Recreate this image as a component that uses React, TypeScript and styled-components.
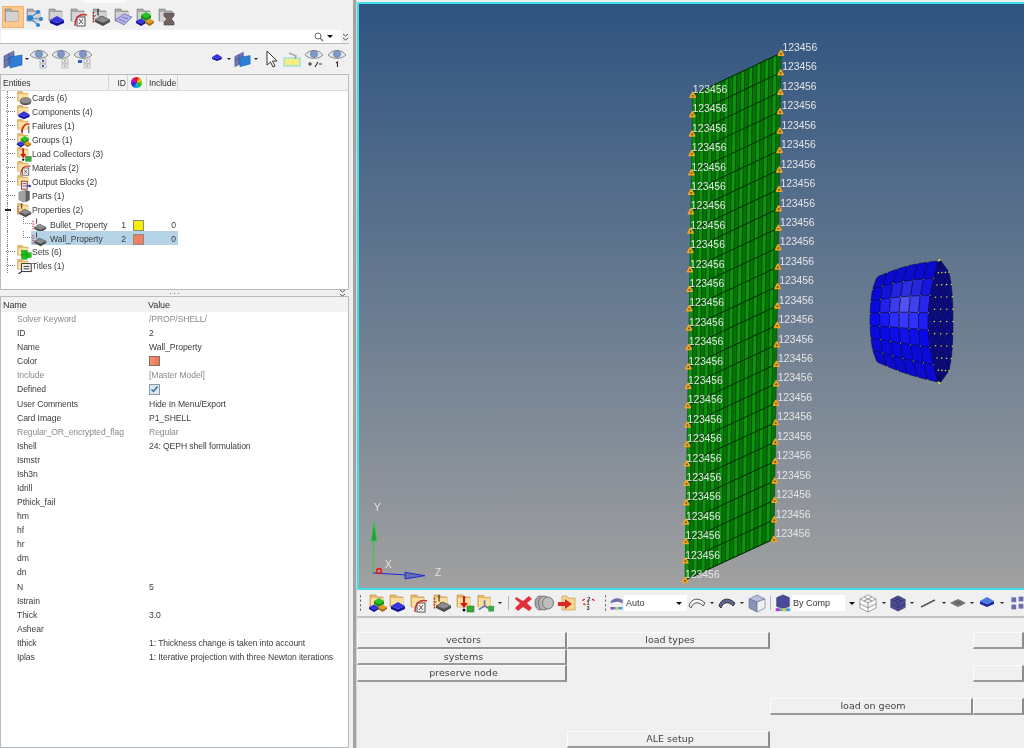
import type { ReactNode } from "react";
import styled, { createGlobalStyle } from "styled-components";

const GlobalStyle = createGlobalStyle`
  html, body { margin: 0; padding: 0; background: #f0f0f0; }
  #root { width: 1024px; height: 748px; overflow: hidden; }
`;

const Page = styled.div`
  width: 1024px;
  height: 748px;
  display: grid;
  grid-template-columns: 349px 8px 1fr;
  background: #f0f0f0;
  font-family: "Liberation Sans", Arial, sans-serif;
  color: #333;
  overflow: hidden;
  filter: blur(0.3px);
`;

const LeftPanel = styled.div`
  display: flex;
  flex-direction: column;
  height: 748px;
  min-width: 0;
`;

const Splitter = styled.div`
  box-sizing: border-box;
  margin-left: 4px;
  border-left: 3px solid #a3a3a3;
  border-right: 1px solid #d4d4d4;
  background: #f0f0f0;
`;

const RightPanel = styled.div`
  display: flex;
  flex-direction: column;
  height: 748px;
  min-width: 0;
`;

const Viewport = styled.div`
  height: 588px;
  flex: none;
  box-sizing: border-box;
  margin-top: 2px;
  border-top: 2px solid #40dfe6;
  border-left: 2px solid #40dfe6;
  border-bottom: 2px solid #40dfe6;
  background: linear-gradient(180deg, #2f5480 0%, #a0a0a0 100%);
  svg { display: block; }
`;

const TopTabs = styled.div`
  height: 3px;
  display: flex;
  padding-left: 84px;
  &::before {
    content: "";
    width: 41px;
    background: #fafafa;
  }
`;

const IconBar = styled.div`
  height: 27px;
  display: flex;
  align-items: center;
  padding-left: 2px;
`;

const ToolSlot = styled.div<{ $w?: number; $active?: boolean }>`
  width: ${(p) => p.$w ?? 22}px;
  height: 22px;
  flex: none;
  display: flex;
  align-items: center;
  justify-content: center;
  background: ${(p) => (p.$active ? "#fdc98c" : "transparent")};
  border: ${(p) => (p.$active ? "1px solid #f2b26b" : "none")};
  box-sizing: border-box;
`;

const SearchRow = styled.div`
  height: 13px;
  display: flex;
  align-items: center;
  border-bottom: 1px solid #b9b9b9;
`;

const SearchBox = styled.div`
  width: 340px;
  height: 13px;
  margin-left: 1px;
  background: #fff;
  display: flex;
  align-items: center;
  justify-content: flex-end;
  gap: 3px;
  padding-right: 8px;
  box-sizing: border-box;
`;

const ViewBar = styled.div`
  height: 30px;
  display: flex;
  align-items: center;
  padding-left: 3px;
`;

const Spacer = styled.div`
  flex: 1;
`;

const TreeBox = styled.div`
  height: 216px;
  box-sizing: border-box;
  border: 1px solid #b4bcc4;
  background: #fff;
  font-size: 8.6px;
  letter-spacing: -0.08px;
`;

const HeaderRow = styled.div`
  height: 15px;
  display: grid;
  grid-template-columns: 108px 19px 19px 31px;
  background: #f2f2f2;
  border-bottom: 1px solid #d8dde2;
`;

const HeaderCell = styled.div<{ $right?: boolean }>`
  display: flex;
  align-items: center;
  justify-content: ${(p) => (p.$right ? "flex-end" : "flex-start")};
  padding: 0 1px 0 2px;
  border-right: 1px solid #cfd5da;
  color: #333;
  line-height: 14px;
`;

const ColorWheel = styled.span`
  width: 11px;
  height: 11px;
  border-radius: 50%;
  margin-left: 1px;
  background: conic-gradient(#e01010, #e0d010, #10c020, #10b0e0, #2020e0, #d010c0, #e01010);
`;

const TreeList = styled.div`
  padding-top: 0;
`;

const TreeRow = styled.div`
  height: 14px;
  display: flex;
  align-items: center;
  position: relative;
  white-space: nowrap;
`;

const Branch = styled.span<{ $open?: boolean }>`
  width: 15px;
  height: 14px;
  flex: none;
  position: relative;
  &::before {
    content: "";
    position: absolute;
    left: 6px;
    top: 0;
    bottom: 0;
    border-left: 1px dotted #888;
  }
  &::after {
    content: "";
    position: absolute;
    left: ${(p) => (p.$open ? 4 : 5)}px;
    width: ${(p) => (p.$open ? 6 : 9)}px;
    top: 6px;
    border-top: ${(p) => (p.$open ? "2px solid #222" : "1px dotted #777")};
  }
`;

const ChildBranch = styled.span`
  width: 30px;
  height: 14px;
  flex: none;
  position: relative;
  &::before {
    content: "";
    position: absolute;
    left: 6px;
    top: 0;
    bottom: 0;
    border-left: 1px dotted #888;
  }
  &::after {
    content: "";
    position: absolute;
    left: 22px;
    top: 0;
    height: 6px;
    width: 8px;
    border-left: 1px dotted #888;
    border-bottom: 1px dotted #888;
  }
`;

const TreeLabel = styled.span`
  color: #3c3c3c;
`;

const ChildCells = styled.div<{ $selected?: boolean }>`
  width: 147px;
  height: 14px;
  display: grid;
  grid-template-columns: 19px 59px 19px 20px 30px;
  align-items: center;
  background: ${(p) => (p.$selected ? "#b5d3e7" : "transparent")};
`;

const ChildName = styled.span`
  color: #3c3c3c;
`;

const NumCell = styled.span`
  text-align: right;
  padding-right: 2px;
  color: #3c3c3c;
`;

const Swatch = styled.span<{ $color: string }>`
  display: block;
  width: 11px;
  height: 11px;
  box-sizing: border-box;
  border: 1px solid #8a8a8a;
  background: ${(p) => p.$color};
  margin-left: 5px;
`;

const SashRow = styled.div`
  height: 6px;
  position: relative;
  display: flex;
  justify-content: center;
  align-items: center;
  gap: 3px;
`;

const SashDot = styled.span`
  width: 1px;
  height: 1px;
  background: #777;
`;

const SashArrow = styled.span`
  position: absolute;
  right: 3px;
  top: -1px;
  line-height: 0;
`;

const PropBox = styled.div`
  flex: 1;
  box-sizing: border-box;
  border: 1px solid #b4bcc4;
  background: #fff;
  font-size: 8.6px;
  letter-spacing: -0.08px;
`;

const PropHeader = styled.div`
  height: 15px;
  display: grid;
  grid-template-columns: 145px 1fr;
  align-items: center;
  background: #f2f2f2;
  padding-left: 2px;
  color: #333;
  font-size: 9px;
`;

const PropRow = styled.div`
  height: 14.08px;
  display: grid;
  grid-template-columns: 132px 1fr;
  align-items: center;
  padding-left: 16px;
  white-space: nowrap;
`;

const PropText = styled.span<{ $muted?: boolean }>`
  color: ${(p) => (p.$muted ? "#8a8a8a" : "#3c3c3c")};
`;

const ColorChip = styled.span`
  display: block;
  width: 11px;
  height: 10px;
  box-sizing: border-box;
  border: 1px solid #8c6a5c;
  background: linear-gradient(90deg, #f4926e, #ec7654);
`;

const CheckChip = styled.span`
  display: flex;
  width: 11px;
  height: 11px;
  box-sizing: border-box;
  border: 1px solid #8a9aa6;
  background: #dfe6ea;
  align-items: center;
  justify-content: center;
`;

const BottomBar = styled.div`
  height: 28px;
  flex: none;
  display: flex;
  align-items: center;
  border-bottom: 2px solid #c2c2c2;
  box-sizing: border-box;
  overflow: hidden;
`;

const Handle = styled.span`
  width: 8px;
  flex: none;
  height: 18px;
  margin-left: 2px;
  background-image: radial-gradient(circle, #444 0.8px, transparent 1px);
  background-size: 3px 4.5px;
  background-repeat: repeat-y;
`;

const MiddleHandle = styled(Handle)`
  width: 6px;
  margin-left: 8px;
`;

const Separator = styled.span`
  width: 1px;
  height: 14px;
  flex: none;
  background: #b5b5b5;
  margin: 0 3px;
`;

const ArrowDown = styled.span`
  width: 0;
  height: 0;
  flex: none;
  border-left: 2px solid transparent;
  border-right: 2px solid transparent;
  border-top: 2px solid #222;
  margin: 0 3px;
`;

const TightArrow = styled(ArrowDown)`
  margin: 0 -1px 0 2px;
`;

const Combo = styled.div<{ $w: number; $pad: number }>`
  width: ${(p) => p.$w}px;
  height: 16px;
  flex: none;
  background: #fff;
  display: flex;
  align-items: center;
  justify-content: space-between;
  padding: 0 5px 0 ${(p) => p.$pad}px;
  box-sizing: border-box;
  font-size: 9px;
  color: #333;
`;

const ComboArrow = styled.span`
  width: 0;
  height: 0;
  border-left: 3px solid transparent;
  border-right: 3px solid transparent;
  border-top: 3px solid #111;
`;

const OuterComboArrow = styled(ComboArrow)`
  flex: none;
  margin: 0 2px 0 4px;
`;

const PanelGrid = styled.div`
  flex: 1;
  display: grid;
  grid-template-columns: 210px 203px 203px 1fr;
  grid-template-rows: repeat(7, 16.5px);
  padding-top: 14px;
  border-bottom: 1px solid #c8c8c8;
  font-family: "DejaVu Sans", sans-serif;
  font-size: 9.5px;
  color: #444;
`;

const PanelButton = styled.div<{ $col: number; $row: number }>`
  grid-column: ${(p) => p.$col};
  grid-row: ${(p) => p.$row};
  display: flex;
  align-items: center;
  justify-content: center;
  box-sizing: border-box;
  padding-left: 4px;
  background: #f0f0f0;
  border-top: 1px solid #fbfbfb;
  border-left: 1px solid #fbfbfb;
  border-right: 2px solid #8c8c8c;
  border-bottom: 2px solid #999;
`;

const TONES = {
  gray: { back: "#a9a9a9", front: "#d2d2d2", edge: "#7e7e7e" },
  yellow: { back: "#e8b868", front: "#fbdf9f", edge: "#c08e3e" },
};

function Glyph({ size = 20, children }: { size?: number; children: ReactNode }) {
  return (
    <svg width={size} height={size} viewBox="0 0 20 20">
      {children}
    </svg>
  );
}

function Folder({ tone }: { tone: "gray" | "yellow" }) {
  const t = TONES[tone];
  return (
    <>
      <path d="M2 2h6l1 2h6v10H2z" fill={t.back} stroke={t.edge} strokeWidth="0.6" />
      <path d="M3 5h12v9H3z" fill={t.front} />
    </>
  );
}

const Slab = ({ fill = "#3535e0", side = "#12129a", y = 10 }: { fill?: string; side?: string; y?: number }) => (
  <>
    <path d={`M3 ${y + 3}l7 3 7-3v3l-7 3-7-3z`} fill={side} />
    <path d={`M3 ${y + 3}l7-4 7 4-7 3z`} fill={fill} />
  </>
);

const GrayDisc = () => (
  <>
    <ellipse cx="12" cy="15" rx="7" ry="4" fill="#555" />
    <ellipse cx="12" cy="13.2" rx="7" ry="3.8" fill="#8e8e8e" stroke="#444" strokeWidth="0.5" />
  </>
);

const Failure = () => (
  <>
    <path d="M8 19V12M16 19v-9" stroke="#333" strokeWidth="1.1" />
    <path d="M7 18C8 9 13 6 17 8" fill="none" stroke="#d02020" strokeWidth="1.8" />
  </>
);

const Cubes = () => (
  <>
    <path d="M6 8l5-3 5 3-5 3z" fill="#22c422" />
    <path d="M6 8v3l5 3 5-3V8l-5 3z" fill="#129012" />
    <path d="M1 14l5-2.5 5 2.5-5 2.5z" fill="#3535e0" />
    <path d="M1 14v2l5 3 5-3v-2l-5 2.5z" fill="#12129a" />
    <path d="M10 14l4.500-2.500 4.500 2.500-4.500 2.500z" fill="#e09a20" />
    <path d="M10 14v2l4.500 3 4.500-3v-2l-4.500 2.500z" fill="#a86c10" />
  </>
);

const RedArrowBox = () => (
  <>
    <path d="M9 3v9" stroke="#d01818" strokeWidth="2.2" />
    <path d="M5 10h8L9 15z" fill="#d01818" />
    <circle cx="9" cy="17" r="1.5" fill="#111" />
    <rect x="12" y="13" width="7" height="6" fill="#3aa83a" stroke="#1b701b" strokeWidth="0.5" />
  </>
);

const MaterialMark = () => (
  <>
    <rect x="8" y="10" width="8" height="9" fill="#f4f4f4" stroke="#444" strokeWidth="0.9" />
    <path d="M6 19C6 10 11 6 18 8" fill="none" stroke="#c83030" strokeWidth="1.4" />
    <path d="M10 12l4 5M14 12l-4 5" stroke="#333" strokeWidth="0.8" />
  </>
);

const OutputMark = () => (
  <>
    <rect x="7" y="9" width="7" height="10" fill="#eee" stroke="#a02020" strokeWidth="1.1" />
    <path d="M8.500 12h4M8.500 15h4" stroke="#333" strokeWidth="0.9" />
    <path d="M13 15h5" stroke="#2020d0" strokeWidth="1.3" />
    <path d="M16 13l3.500 2-3.500 2z" fill="#2020d0" />
  </>
);

const PropMark = () => (
  <>
    <path d="M2.500 5v11" stroke="#d01818" strokeWidth="1.4" strokeDasharray="1.5 1.5" />
    <path d="M7 2v6" stroke="#222" strokeWidth="1.1" />
    <path d="M5 8l-2 2M7 8l2 2" stroke="#222" strokeWidth="0.5" />
    <path d="M4 13l7-4 8 4-7 3z" fill="#8d8d8d" stroke="#333" strokeWidth="0.6" />
    <path d="M4 13v2l8 4 7-4v-2l-7 3z" fill="#4c4c4c" />
  </>
);

const SetsMark = () => (
  <>
    <rect x="7" y="8" width="7" height="6" fill="#18c018" stroke="#0a7a0a" strokeWidth="0.5" />
    <rect x="12" y="11" width="7" height="6" fill="#18c018" stroke="#0a7a0a" strokeWidth="0.5" />
    <rect x="7" y="13" width="7" height="6" fill="#18c018" stroke="#0a7a0a" strokeWidth="0.5" />
  </>
);

const TitleMark = () => (
  <>
    <rect x="7" y="7" width="12" height="10" fill="#f4f4f4" stroke="#222" strokeWidth="1.1" />
    <path d="M9.500 10.500h7M9.500 13.500h7" stroke="#222" strokeWidth="1.1" />
    <path d="M7 17l-4 3" stroke="#222" strokeWidth="1.4" />
  </>
);

const Network = () => (
  <>
    <path d="M5 11l8-6M5 11l10 1M5 11l8 7" stroke="#4a90d0" strokeWidth="1.1" />
    <circle cx="5" cy="11" r="3" fill="#2d7fd0" />
    <circle cx="13" cy="5" r="2" fill="#2d7fd0" />
    <circle cx="16" cy="12" r="2" fill="#2d7fd0" />
    <circle cx="13" cy="18" r="2" fill="#2d7fd0" />
  </>
);

const Wavy = () => (
  <>
    <path d="M2 13l9-6 8 3-8 8z" fill="#b4b4e4" stroke="#6a6abc" strokeWidth="0.8" />
    <path d="M6 12l6 3M9 10l6 2" stroke="#6a6abc" strokeWidth="0.8" fill="none" />
  </>
);

const SpoolMark = () => (
  <path d="M7 6h10v3l-3 3 3 3v3H7v-3l3-3-3-3z" fill="#6e625e" stroke="#4a4240" strokeWidth="0.6" />
);

const Sheets = () => (
  <>
    <path d="M1 7l10-5v12l-10 5z" fill="#6d78b6" stroke="#4a5090" strokeWidth="0.6" />
    <path d="M1 12l10-5M6 4.500v12" stroke="#3f467f" strokeWidth="0.6" />
    <path d="M7 8l12-2v10l-12 3z" fill="#2e7ed8" stroke="#1d5ba6" strokeWidth="0.6" />
  </>
);

const EyeShape = () => (
  <>
    <path d="M1 6C5 0 15 0 19 6C15 10.500 5 10.500 1 6z" fill="#e0e4ea" stroke="#777" strokeWidth="0.8" />
    <circle cx="10" cy="5" r="3.600" fill="#7d9ac8" stroke="#5c6c88" strokeWidth="0.5" />
  </>
);

const EyeTree = ({ variant }: { variant: number }) => (
  <>
    <EyeShape />
    <rect x="11" y="10" width="6" height="4" fill="#eee" stroke="#999" strokeWidth="0.6" />
    <rect x="11" y="15" width="6" height="4" fill="#eee" stroke="#999" strokeWidth="0.6" />
    <rect x="13" y="11" width="2" height="2" fill={variant === 1 ? "#2d60c0" : "#bbb"} />
    <rect x="13" y="16" width="2" height="2" fill={variant === 1 ? "#2d60c0" : "#bbb"} />
    {variant === 3 && <rect x="5" y="11" width="4" height="3" fill="#2d60c0" />}
  </>
);

const TREE = [
  { label: "Cards (6)", mark: <GrayDisc /> },
  { label: "Components (4)", mark: <Slab /> },
  { label: "Failures (1)", mark: <Failure /> },
  { label: "Groups (1)", mark: <Cubes /> },
  { label: "Load Collectors (3)", mark: <RedArrowBox /> },
  { label: "Materials (2)", mark: <MaterialMark /> },
  { label: "Output Blocks (2)", mark: <OutputMark /> },
];

const PROPS: { name: string; value?: string; muted?: boolean; kind?: "color" | "check" }[] = [
  { name: "Solver Keyword", value: "/PROP/SHELL/", muted: true },
  { name: "ID", value: "2" },
  { name: "Name", value: "Wall_Property" },
  { name: "Color", kind: "color" },
  { name: "Include", value: "[Master Model]", muted: true },
  { name: "Defined", kind: "check" },
  { name: "User Comments", value: "Hide In Menu/Export" },
  { name: "Card Image", value: "P1_SHELL" },
  { name: "Regular_OR_encrypted_flag", value: "Regular", muted: true },
  { name: "Ishell", value: "24: QEPH shell formulation" },
  { name: "Ismstr" },
  { name: "Ish3n" },
  { name: "Idrill" },
  { name: "Pthick_fail" },
  { name: "hm" },
  { name: "hf" },
  { name: "hr" },
  { name: "dm" },
  { name: "dn" },
  { name: "N", value: "5" },
  { name: "Istrain" },
  { name: "Thick", value: "3.0" },
  { name: "Ashear" },
  { name: "Ithick", value: "1: Thickness change is taken into account" },
  { name: "Iplas", value: "1: Iterative projection with three Newton iterations" },
];

const NODE_COUNT = 26;
const wallLeft = (i: number) => ({ x: 692.7 - (7.7 * i) / 25, y: 95 + (485 * i) / 25 });
const wallRight = (i: number) => ({ x: 781 - (7 * i) / 25, y: 53 + (486 * i) / 25 });
const WALL_COLUMNS = 22;

function lerp(a: number, b: number, t: number) {
  return a + (b - a) * t;
}

function Wall() {
  const top = wallLeft(0);
  const topR = wallRight(0);
  const bot = wallLeft(25);
  const botR = wallRight(25);
  const strips = Array.from({ length: WALL_COLUMNS }, (_, c) => {
    const t0 = c / WALL_COLUMNS;
    const t1 = (c + 1) / WALL_COLUMNS;
    const pts = [
      [lerp(top.x, topR.x, t0), lerp(top.y, topR.y, t0)],
      [lerp(top.x, topR.x, t1), lerp(top.y, topR.y, t1)],
      [lerp(bot.x, botR.x, t1), lerp(bot.y, botR.y, t1)],
      [lerp(bot.x, botR.x, t0), lerp(bot.y, botR.y, t0)],
    ];
    return (
      <polygon
        key={c}
        points={pts.map((p) => p.join(",")).join(" ")}
        fill={c % 2 === 0 ? "#0c960c" : "#087408"}
        stroke="#054a08"
        strokeWidth="0.7"
      />
    );
  });
  const nodes = Array.from({ length: NODE_COUNT }, (_, i) => i);
  return (
    <g>
      {strips}
      {nodes.map((i) => {
        const a = wallLeft(i);
        const b = wallRight(i);
        return <line key={i} x1={a.x} y1={a.y} x2={b.x} y2={b.y} stroke="#042a08" strokeWidth="1" />;
      })}
      {nodes.map((i) =>
        [wallLeft(i), wallRight(i)].map((p, k) => (
          <g key={`${i}-${k}`}>
            <path
              d={`M${p.x} ${p.y - 2.6}l2.6 4.8h-5.2z`}
              fill="#5a5030"
              stroke="#f2a51e"
              strokeWidth="1.6"
              strokeLinejoin="round"
            />
            <text x={p.x + (k === 0 ? 0 : 1.5)} y={p.y - 2} fontSize="10.4" fill="#e4e4e4" fontFamily="Liberation Sans, sans-serif">
              123456
            </text>
          </g>
        ))
      )}
    </g>
  );
}

const COLS = 6;
const ROWS = 7;

function round(v: number) {
  return Math.pow(Math.sin(Math.PI * v), 0.55);
}

function frontPoint(u: number, v: number) {
  const arc = Math.sin(Math.PI * u);
  const xl = 877 - 7 * round(v);
  const xr = 938 - 10 * Math.sin(Math.PI * v);
  const yt = lerp(277, 261, u) - 3 * arc;
  const yb = lerp(362, 382, u) + 2 * arc;
  return { x: lerp(xl, xr, u), y: lerp(yt, yb, v) };
}

function sidePoint(u: number, v: number) {
  const start = frontPoint(1, v);
  return { x: start.x + u * (23 * round(v) + 2), y: start.y - u * 4 * (0.5 - v) * 0.6 };
}

function shade(u: number, v: number) {
  const d = Math.hypot((u - 0.6) * 1, (v - 0.38) * 1.7);
  const light = Math.max(0, 1 - d / 0.5);
  const dark = Math.min(1, Math.abs(v - 0.5) * 1.7) * 0.6 + (u < 0.1 ? 0.1 : 0);
  const r = Math.round(10 + 80 * light);
  const g = Math.round(10 + 80 * light);
  const b = Math.round(245 - 85 * dark + 10 * light);
  return `rgb(${r},${g},${Math.min(255, b)})`;
}

function Bullet() {
  const quads: ReactNode[] = [];
  const dots: ReactNode[] = [];
  for (let c = 0; c < COLS; c++) {
    for (let r = 0; r < ROWS; r++) {
      const u0 = c / COLS;
      const u1 = (c + 1) / COLS;
      const v0 = r / ROWS;
      const v1 = (r + 1) / ROWS;
      const pts = [frontPoint(u0, v0), frontPoint(u1, v0), frontPoint(u1, v1), frontPoint(u0, v1)];
      quads.push(
        <polygon
          key={`f${c}-${r}`}
          points={pts.map((p) => `${p.x},${p.y}`).join(" ")}
          fill={shade((u0 + u1) / 2, (v0 + v1) / 2)}
          stroke="#06064a"
          strokeWidth="0.6"
        />
      );
    }
  }
  const sideCols = 4;
  const sideRows = 10;
  for (let c = 0; c < sideCols; c++) {
    for (let r = 0; r < sideRows; r++) {
      const a = sidePoint(c / sideCols, r / sideRows);
      const b = sidePoint((c + 1) / sideCols, r / sideRows);
      const d = sidePoint((c + 1) / sideCols, (r + 1) / sideRows);
      const e = sidePoint(c / sideCols, (r + 1) / sideRows);
      quads.push(
        <polygon
          key={`s${c}-${r}`}
          points={`${a.x},${a.y} ${b.x},${b.y} ${d.x},${d.y} ${e.x},${e.y}`}
          fill="#0c0c84"
          stroke="#05054a"
          strokeWidth="0.5"
        />
      );
      quads.push(<line key={`t${c}-${r}`} x1={a.x} y1={a.y} x2={d.x} y2={d.y} stroke="#05054a" strokeWidth="0.5" />);
    }
  }
  for (let c = 0; c <= COLS; c++) {
    for (let r = 0; r <= ROWS; r++) {
      const p = frontPoint(c / COLS, r / ROWS);
      dots.push(<circle key={`d${c}-${r}`} cx={p.x} cy={p.y} r="0.55" fill="#b8b850" />);
    }
  }
  for (let c = 1; c <= sideCols; c++) {
    for (let r = 0; r <= sideRows; r++) {
      const p = sidePoint(c / sideCols, r / sideRows);
      dots.push(<circle key={`e${c}-${r}`} cx={p.x} cy={p.y} r="0.8" fill="#d8d84a" />);
    }
  }
  return (
    <g>
      {quads}
      {dots}
    </g>
  );
}

function Triad() {
  return (
    <g fontFamily="Liberation Sans, sans-serif" fontSize="10" fill="#e4e4e4">
      <line x1="373" y1="573" x2="374" y2="530" stroke="#30d040" strokeWidth="1" />
      <path d="M374 522l-3 19h6z" fill="#2e9a48" stroke="#30d040" strokeWidth="0.8" />
      <line x1="373" y1="573" x2="408" y2="575" stroke="#2a2ae0" strokeWidth="1.2" />
      <path d="M425 575.7l-20-3.4v6.6z" fill="#6070a8" stroke="#2020e0" strokeWidth="0.9" />
      <circle cx="379" cy="571" r="2.4" fill="none" stroke="#e02020" strokeWidth="1.6" />
      <text x="374" y="511">Y</text>
      <text x="385" y="568">X</text>
      <text x="435" y="576">Z</text>
    </g>
  );
}

const Chevrons = () => (
  <svg width="7" height="8" viewBox="0 0 7 8">
    <path d="M1 1l2.500 2L6 1M1 5l2.500 2L6 5" fill="none" stroke="#555" strokeWidth="1" />
  </svg>
);

export default function App() {
  return (
    <>
      <GlobalStyle />
      <Page>
        <LeftPanel>
          <TopTabs />
          <IconBar>
            <ToolSlot $active><Glyph><Folder tone="gray" /></Glyph></ToolSlot>
            <ToolSlot><Glyph><Folder tone="gray" /><Network /></Glyph></ToolSlot>
            <ToolSlot><Glyph><Folder tone="gray" /><Slab /></Glyph></ToolSlot>
            <ToolSlot><Glyph><Folder tone="gray" /><MaterialMark /></Glyph></ToolSlot>
            <ToolSlot><Glyph><Folder tone="gray" /><PropMark /></Glyph></ToolSlot>
            <ToolSlot><Glyph><Folder tone="gray" /><Wavy /></Glyph></ToolSlot>
            <ToolSlot><Glyph><Folder tone="gray" /><Cubes /></Glyph></ToolSlot>
            <ToolSlot><Glyph><Folder tone="gray" /><SpoolMark /></Glyph></ToolSlot>
          </IconBar>
          <SearchRow>
            <SearchBox>
              <svg width="10" height="10" viewBox="0 0 10 10">
                <circle cx="4" cy="4" r="3" fill="none" stroke="#666" strokeWidth="1" />
                <path d="M6.200 6.200L9 9" stroke="#666" strokeWidth="1.2" />
              </svg>
              <ComboArrow />
            </SearchBox>
            <ToolSlot $w={8}><Chevrons /></ToolSlot>
          </SearchRow>
          <ViewBar>
            <ToolSlot $w={20}><Glyph><Sheets /></Glyph></ToolSlot>
            <TightArrow />
            <ToolSlot><Glyph><EyeTree variant={1} /></Glyph></ToolSlot>
            <ToolSlot><Glyph><EyeTree variant={2} /></Glyph></ToolSlot>
            <ToolSlot><Glyph><EyeTree variant={3} /></Glyph></ToolSlot>
            <Spacer />
            <ToolSlot $w={14}><Glyph size={14}><Slab y={4} /></Glyph></ToolSlot>
            <ArrowDown />
            <ToolSlot $w={17}><Glyph><Sheets /></Glyph></ToolSlot>
            <ArrowDown />
            <ToolSlot $w={20}>
              <Glyph>
                <path d="M6 2v14l3.500-3 2.500 5 2-1-2.500-5H16z" fill="#fff" stroke="#333" strokeWidth="1" />
              </Glyph>
            </ToolSlot>
            <ToolSlot>
              <Glyph>
                <rect x="2" y="9" width="16" height="8" fill="#f4ee80" stroke="#8fdcea" strokeWidth="1.2" />
                <path d="M7 4l7 3-1 3" fill="none" stroke="#9ab0a0" strokeWidth="1.5" />
              </Glyph>
            </ToolSlot>
            <ToolSlot>
              <Glyph>
                <EyeShape />
                <path d="M4 15h4M6 13v4M11 18l3-5M15 15h3" stroke="#333" strokeWidth="1.1" />
              </Glyph>
            </ToolSlot>
            <ToolSlot $w={24}>
              <Glyph>
                <EyeShape />
                <path d="M9 14l1.500-1v5" fill="none" stroke="#333" strokeWidth="1.1" />
              </Glyph>
            </ToolSlot>
          </ViewBar>
          <TreeBox>
            <HeaderRow>
              <HeaderCell>Entities</HeaderCell>
              <HeaderCell $right>ID</HeaderCell>
              <HeaderCell><ColorWheel /></HeaderCell>
              <HeaderCell>Include</HeaderCell>
            </HeaderRow>
            <TreeList>
              {TREE.map((t) => (
                <TreeRow key={t.label}>
                  <Branch />
                  <Glyph size={16}><Folder tone="yellow" />{t.mark}</Glyph>
                  <TreeLabel>{t.label}</TreeLabel>
                </TreeRow>
              ))}
              <TreeRow>
                <Branch />
                <Glyph size={16}>
                  <path d="M3 5l9-3 5 2v11l-8 3-6-3z" fill="#a2a2a2" />
                  <path d="M12 3l5 1v11l-5 3z" fill="#5f5f5f" />
                </Glyph>
                <TreeLabel>Parts (1)</TreeLabel>
              </TreeRow>
              <TreeRow>
                <Branch $open />
                <Glyph size={16}><Folder tone="yellow" /><PropMark /></Glyph>
                <TreeLabel>Properties (2)</TreeLabel>
              </TreeRow>
              <TreeRow>
                <ChildBranch />
                <ChildCells>
                  <Glyph size={16}><PropMark /></Glyph>
                  <ChildName>Bullet_Property</ChildName>
                  <NumCell>1</NumCell>
                  <Swatch $color="#f6f000" />
                  <NumCell>0</NumCell>
                </ChildCells>
              </TreeRow>
              <TreeRow>
                <ChildBranch />
                <ChildCells $selected>
                  <Glyph size={16}><PropMark /></Glyph>
                  <ChildName>Wall_Property</ChildName>
                  <NumCell>2</NumCell>
                  <Swatch $color="#f08060" />
                  <NumCell>0</NumCell>
                </ChildCells>
              </TreeRow>
              <TreeRow>
                <Branch />
                <Glyph size={16}><Folder tone="yellow" /><SetsMark /></Glyph>
                <TreeLabel>Sets (6)</TreeLabel>
              </TreeRow>
              <TreeRow>
                <Branch />
                <Glyph size={16}><Folder tone="yellow" /><TitleMark /></Glyph>
                <TreeLabel>Titles (1)</TreeLabel>
              </TreeRow>
            </TreeList>
          </TreeBox>
          <SashRow>
            <SashDot />
            <SashDot />
            <SashDot />
            <SashArrow><Chevrons /></SashArrow>
          </SashRow>
          <PropBox>
            <PropHeader>
              <span>Name</span>
              <span>Value</span>
            </PropHeader>
            {PROPS.map((p) => (
              <PropRow key={p.name}>
                <PropText $muted={p.muted}>{p.name}</PropText>
                {p.kind === "color" && <ColorChip />}
                {p.kind === "check" && (
                  <CheckChip>
                    <svg width="9" height="9" viewBox="0 0 9 9">
                      <path d="M1.500 4.500l2 2 4-5" fill="none" stroke="#1f6fb0" strokeWidth="1.4" />
                    </svg>
                  </CheckChip>
                )}
                {!p.kind && <PropText $muted={p.muted}>{p.value}</PropText>}
              </PropRow>
            ))}
          </PropBox>
        </LeftPanel>
        <Splitter />
        <RightPanel>
          <Viewport>
            <svg width="665" height="584" viewBox="359 4 665 584">
              <Wall />
              <Bullet />
              <Triad />
            </svg>
          </Viewport>
          <BottomBar>
            <Handle />
            <ToolSlot $w={21}><Glyph><Folder tone="yellow" /><Cubes /></Glyph></ToolSlot>
            <ToolSlot $w={20}><Glyph><Folder tone="yellow" /><Slab /></Glyph></ToolSlot>
            <ToolSlot $w={22}><Glyph><Folder tone="yellow" /><MaterialMark /></Glyph></ToolSlot>
            <ToolSlot $w={23}><Glyph><Folder tone="yellow" /><PropMark /></Glyph></ToolSlot>
            <ToolSlot $w={23}><Glyph><Folder tone="yellow" /><RedArrowBox /></Glyph></ToolSlot>
            <ToolSlot $w={19}>
              <Glyph>
                <Folder tone="yellow" />
                <path d="M9 7v6M9 13l-6 4M9 13l5 3" stroke="#6a78b0" strokeWidth="1.8" />
                <rect x="13" y="13" width="6" height="6" fill="#3aa83a" />
              </Glyph>
            </ToolSlot>
            <ArrowDown />
            <Separator />
            <ToolSlot $w={22}>
              <Glyph>
                <path d="M3 4l7 4 6-5 3 3-5 4 5 5-3 3-6-4-5 4-3-3 5-5-5-4z" fill="#e0303a" />
              </Glyph>
            </ToolSlot>
            <ToolSlot $w={20}>
              <Glyph>
                <ellipse cx="6" cy="10" rx="5" ry="7" fill="#a8a8a8" stroke="#777" />
                <ellipse cx="10" cy="10" rx="5.500" ry="7" fill="#b4b4b4" stroke="#777" />
                <ellipse cx="14" cy="10" rx="5.500" ry="6" fill="#bdbdbd" stroke="#777" />
              </Glyph>
            </ToolSlot>
            <ToolSlot $w={26}>
              <Glyph>
                <path d="M5 3h5l1 2h7v12H5z" fill="#f7d68e" stroke="#c08e3e" strokeWidth="0.6" />
                <path d="M1 9h7V6l7 5-7 5v-3H1z" fill="#d82828" />
              </Glyph>
            </ToolSlot>
            <ToolSlot $w={16}>
              <Glyph>
                <path d="M3 7l3-2M15 5l3 2M4 11l3 1" stroke="#d82020" strokeWidth="1.6" />
                <text x="9" y="7" fontSize="7" fontWeight="700" fill="#333" fontFamily="Liberation Sans">2</text>
                <text x="8" y="13" fontSize="7" fontWeight="700" fill="#333" fontFamily="Liberation Sans">1</text>
                <text x="8" y="19" fontSize="7" fontWeight="700" fill="#333" fontFamily="Liberation Sans">3</text>
              </Glyph>
            </ToolSlot>
            <MiddleHandle />
            <ToolSlot $w={14}>
              <Glyph size={15}>
                <path d="M1 7c4-5 11-6 17-2v5c-5-4-12-3-17 0z" fill="#7272a8" />
                <rect x="1" y="15" width="17" height="3.500" fill="#40a0e0" />
                <rect x="8" y="15" width="4" height="3.500" fill="#e0d020" />
                <rect x="1" y="15" width="4" height="3.500" fill="#d030c0" />
              </Glyph>
            </ToolSlot>
            <Combo $w={63} $pad={2}>Auto<ComboArrow /></Combo>
            <ToolSlot $w={20}>
              <Glyph><path d="M2 13c2-8 10-9 16-3l-2 3C12 8 6 9 4 15z" fill="#f4f4f4" stroke="#555" /></Glyph>
            </ToolSlot>
            <ArrowDown />
            <ToolSlot $w={20}>
              <Glyph><path d="M2 13c2-8 10-9 16-3l-2 3C12 8 6 9 4 15z" fill="#5c6690" stroke="#333" /></Glyph>
            </ToolSlot>
            <ArrowDown />
            <ToolSlot $w={20}>
              <Glyph>
                <path d="M2 6l8-4 8 4-8 3z" fill="#b4c0dc" stroke="#5c6690" strokeWidth="0.6" />
                <path d="M2 6v9l8 4V9z" fill="#8a94b8" stroke="#5c6690" strokeWidth="0.6" />
                <path d="M18 6v9l-8 4V9z" fill="#f0f0f0" stroke="#5c6690" strokeWidth="0.6" />
              </Glyph>
            </ToolSlot>
            <Separator />
            <ToolSlot $w={18}>
              <Glyph>
                <path d="M3 4l7-3 7 3v10l-7 2-7-2z" fill="#4a4a9a" stroke="#2a2a60" strokeWidth="0.6" />
                <rect x="2" y="16" width="16" height="3" fill="#40a0e0" />
                <rect x="9" y="16" width="4" height="3" fill="#e0d020" />
                <rect x="2" y="16" width="4" height="3" fill="#d030c0" />
              </Glyph>
            </ToolSlot>
            <Combo $w={53} $pad={1}>By Comp</Combo>
            <OuterComboArrow />
            <ToolSlot $w={22}>
              <Glyph>
                <path d="M2 6l8-4 8 4v9l-8 4-8-4zM2 6l8 4 8-4M10 10v9M2 11l8 4 8-4M6 4l8 4M14 4l-8 4" fill="#fff" stroke="#777" strokeWidth="0.7" />
              </Glyph>
            </ToolSlot>
            <ArrowDown />
            <ToolSlot $w={18}>
              <Glyph>
                <path d="M2 6l8-4 8 4v9l-8 4-8-4z" fill="#4e4e96" stroke="#2a2a5e" strokeWidth="0.6" />
                <path d="M2 6l8 4 8-4M10 10v9M2 11l8 4 8-4M6 4l8 4M14 4l-8 4" fill="none" stroke="#2a2a5e" strokeWidth="0.7" />
              </Glyph>
            </ToolSlot>
            <ArrowDown />
            <ToolSlot $w={22}>
              <Glyph><path d="M3 14L17 7" stroke="#555" strokeWidth="1.5" /></Glyph>
            </ToolSlot>
            <ArrowDown />
            <ToolSlot $w={18}>
              <Glyph>
                <path d="M2 10l8-4 8 4-8 4z" fill="#7a7a7a" stroke="#444" strokeWidth="0.6" />
                <path d="M6 8l8 4M14 8l-8 4" stroke="#444" strokeWidth="0.6" />
              </Glyph>
            </ToolSlot>
            <ArrowDown />
            <ToolSlot $w={20}><Glyph><Slab y={5} fill="#4a78e0" side="#1a2aa0" /></Glyph></ToolSlot>
            <ArrowDown />
            <ToolSlot $w={20}>
              <Glyph size={16}>
                <rect x="3" y="3" width="6" height="6" fill="#6c6cae" />
                <rect x="12" y="2" width="6" height="6" fill="#6c6cae" />
                <rect x="3" y="12" width="6" height="6" fill="#6c6cae" />
                <rect x="12" y="11" width="6" height="6" fill="#6c6cae" />
              </Glyph>
            </ToolSlot>
          </BottomBar>
          <PanelGrid>
            <PanelButton $col={1} $row={1}>vectors</PanelButton>
            <PanelButton $col={2} $row={1}>load types</PanelButton>
            <PanelButton $col={4} $row={1} />
            <PanelButton $col={1} $row={2}>systems</PanelButton>
            <PanelButton $col={1} $row={3}>preserve node</PanelButton>
            <PanelButton $col={4} $row={3} />
            <PanelButton $col={3} $row={5}>load on geom</PanelButton>
            <PanelButton $col={4} $row={5} />
            <PanelButton $col={2} $row={7}>ALE setup</PanelButton>
          </PanelGrid>
        </RightPanel>
      </Page>
    </>
  );
}
